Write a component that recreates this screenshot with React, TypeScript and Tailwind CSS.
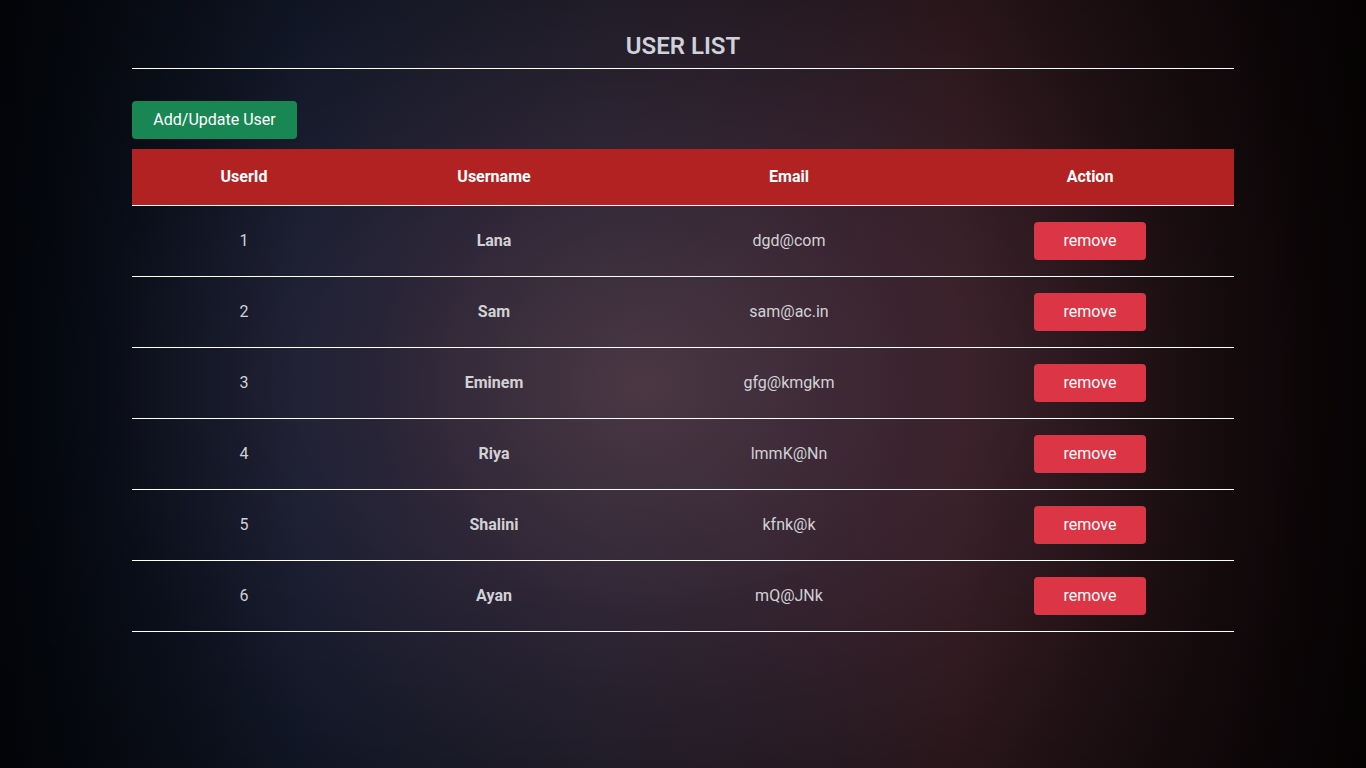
const users = [
  { id: 1, name: "Lana", email: "dgd@com" },
  { id: 2, name: "Sam", email: "sam@ac.in" },
  { id: 3, name: "Eminem", email: "gfg@kmgkm" },
  { id: 4, name: "Riya", email: "lmmK@Nn" },
  { id: 5, name: "Shalini", email: "kfnk@k" },
  { id: 6, name: "Ayan", email: "mQ@JNk" },
];

export default function App() {
  return (
    <div className="min-h-screen w-full bg-[radial-gradient(ellipse_70%_75%_at_47%_50%,transparent_35%,rgba(0,0,0,0.55)_100%),radial-gradient(ellipse_40%_60%_at_47%_50%,rgba(80,58,70,0.85)_0%,rgba(60,40,55,0.35)_50%,transparent_100%),linear-gradient(to_right,#03060d_0%,#182036_22%,#2a2636_45%,#3c2027_70%,#0a0405_100%)] font-['Roboto',sans-serif] text-[#d2d2d6]">
      <div className="mx-auto w-[1102px]">
        <h1 className="pt-[30px] text-center text-[24px] leading-8 font-semibold text-[#cfd2da]">
          USER LIST
        </h1>
        <div className="mt-[6px] h-px bg-white" />
        <button className="mt-8 h-[38px] w-[165px] rounded bg-[#198754] text-[16px] text-white">
          Add/Update User
        </button>
        <table className="mt-[10px] w-full table-fixed border-collapse">
          <colgroup>
            <col className="w-[224px]" />
            <col className="w-[276px]" />
            <col className="w-[314px]" />
            <col className="w-[288px]" />
          </colgroup>
          <thead>
            <tr className="h-[56px] border-b border-white bg-[#b22222] text-[16px] font-bold text-white">
              <th>UserId</th>
              <th>Username</th>
              <th>Email</th>
              <th>Action</th>
            </tr>
          </thead>
          <tbody>
            {users.map((u) => (
              <tr key={u.id} className="h-[71px] border-b border-white text-center text-[16px]">
                <td>{u.id}</td>
                <td className="font-bold">{u.name}</td>
                <td>{u.email}</td>
                <td>
                  <button className="h-[38px] w-[112px] rounded bg-[#dc3545] text-white">
                    remove
                  </button>
                </td>
              </tr>
            ))}
          </tbody>
        </table>
      </div>
    </div>
  );
}
